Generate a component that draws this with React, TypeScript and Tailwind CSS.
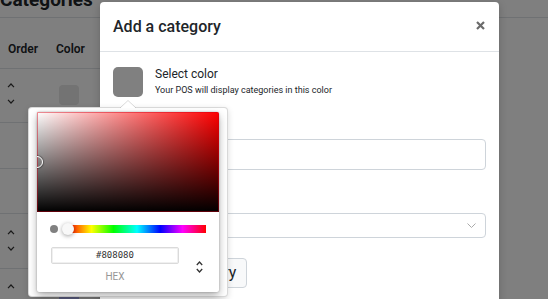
import React from "react";

function ChevronUp({ className = "" }: { className?: string }) {
  return (
    <svg width="8" height="5" viewBox="0 0 8 5" className={className}>
      <path d="M1 4.2 L4 1 L7 4.2" fill="none" stroke="currentColor" strokeWidth="1.2" />
    </svg>
  );
}

function ChevronDown({ className = "" }: { className?: string }) {
  return (
    <svg width="8" height="5" viewBox="0 0 8 5" className={className}>
      <path d="M1 0.8 L4 4 L7 0.8" fill="none" stroke="currentColor" strokeWidth="1.2" />
    </svg>
  );
}

// the page behind the modal
function CategoriesPage() {
  return (
    <div>
      <div className="h-[18px] border-b border-[#dee2e6]">
        <h1 className="relative -top-[10px] text-[19px] leading-[19px] font-bold text-[#212529]">Categories</h1>
      </div>
      <div className="w-[420px]">
        {/* table head */}
        <div className="flex items-end pb-[10px] h-[51px] border-b border-[#dee2e6] text-[12px] font-semibold text-[#212529]">
          <div className="w-[48px] pl-[8px]">Order</div>
          <div className="pl-[8px]">Color</div>
        </div>

        <div className="flex h-[54px] border-b border-[#dee2e6]">
          <div className="w-[48px] pl-[7px] pt-[14px] flex flex-col gap-[11px] text-[#333]">
            <ChevronUp />
            <ChevronDown />
          </div>
          <div className="pt-[16px] pl-[11px]">
            <div className="w-[20px] h-[20px] rounded-[4px] bg-[#e6e6e6]" />
          </div>
        </div>

        <div className="h-[46px] border-b border-[#dee2e6]" />
        <div className="h-[45px] border-b border-[#dee2e6]" />

        <div className="flex h-[55px] border-b border-[#dee2e6]">
          <div className="w-[48px] pl-[7px] pt-[16px] flex flex-col gap-[11px] text-[#333]">
            <ChevronUp />
            <ChevronDown />
          </div>
          <div className="pt-[16px] pl-[11px]">
            <div className="w-[20px] h-[20px] rounded-[4px] bg-[#f0a0a0]" />
          </div>
        </div>

        <div className="flex h-[55px]">
          <div className="w-[48px] pl-[7px] pt-[15px] flex flex-col gap-[11px] text-[#333]">
            <ChevronUp />
            <ChevronDown />
          </div>
          <div className="pt-[16px] pl-[11px]">
            <div className="w-[20px] h-[20px] rounded-[4px] bg-[#b4b8ff]" />
          </div>
        </div>
      </div>
    </div>
  );
}

function ColorPicker() {
  return (
    <div className="absolute left-[28px] top-[107px] w-[200px] h-[190px] bg-white border border-black/15 rounded-[4px] shadow-[0_2px_6px_rgba(0,0,0,0.15)] px-[8px] pt-[4px]">
      {/* arrow */}
      <svg width="16" height="8" viewBox="0 0 16 8" className="absolute left-[91px] -top-[8px]">
        <path d="M0 8 L8 0.5 L16 8 Z" fill="#fff" />
        <path d="M0 8 L8 0.5 L16 8" fill="none" stroke="rgba(0,0,0,0.15)" strokeWidth="1" />
      </svg>

      <div className="w-[182px] h-[180px] bg-white rounded-[2px] shadow-[0_0_2px_rgba(0,0,0,0.3),0_4px_8px_rgba(0,0,0,0.3)]">
        {/* saturation area */}
        <div className="relative h-[100px] bg-[#ff0000] rounded-t-[2px] overflow-hidden">
          <div className="absolute inset-0 bg-[linear-gradient(to_right,#fff,rgba(255,255,255,0))]" />
          <div className="absolute inset-0 bg-[linear-gradient(to_top,#000,rgba(0,0,0,0))]" />
          <div className="absolute inset-0 border border-[rgba(210,0,20,0.45)]" />
          <div className="absolute -left-[6px] top-[44px] w-[12px] h-[12px] rounded-full border-[1.5px] border-white shadow-[0_0_1px_1px_rgba(0,0,0,0.3)]" />
        </div>

        {/* hue row */}
        <div className="flex items-center h-[12px] mt-[11px] pl-[13px] pr-[13px]">
          <div className="w-[8px] h-[8px] rounded-full bg-[#808080]" />
          <div className="relative flex-1 ml-[10px] h-[8px] bg-[linear-gradient(to_right,#f00_0%,#ff0_17%,#0f0_33%,#0ff_50%,#00f_67%,#f0f_83%,#f00_100%)]">
            <div className="absolute -left-[6px] -top-[2px] w-[12px] h-[12px] rounded-full bg-[#f8f8f8] shadow-[0_1px_4px_rgba(0,0,0,0.37)]" />
          </div>
        </div>

        {/* hex field */}
        <div className="flex items-center mt-[12px]">
          <div className="w-[128px] ml-[14px] flex flex-col items-center">
            <div className="w-full h-[17px] border border-[#dadada] rounded-[2px] shadow-[inset_0_0_0_1px_#f0f0f0] flex items-center justify-center font-['DejaVu_Sans_Mono',monospace] text-[9px] text-[#333]">
              #808080
            </div>
            <div className="mt-[7px] text-[10px] leading-[12px] text-[#969696]">HEX</div>
          </div>
          <div className="flex-1 flex flex-col items-center gap-[2px] pt-[3px] text-[#333]">
            <svg width="7" height="5" viewBox="0 0 7 5">
              <path d="M0.8 4 L3.5 1 L6.2 4" fill="none" stroke="currentColor" strokeWidth="1.3" />
            </svg>
            <svg width="7" height="5" viewBox="0 0 7 5">
              <path d="M0.8 1 L3.5 4 L6.2 1" fill="none" stroke="currentColor" strokeWidth="1.3" />
            </svg>
          </div>
        </div>
      </div>
    </div>
  );
}

function AddCategoryModal() {
  return (
    <div className="absolute left-[100px] top-[2px] w-[399px] h-[320px] bg-white rounded-t-[4px] shadow-[0_2px_8px_rgba(0,0,0,0.2)]">
      <div className="h-[50px] flex items-center justify-between px-[13px] border-b border-[#dee2e6]">
        <h2 className="text-[16px] font-medium text-[#212529]">Add a category</h2>
        <svg width="9" height="9" viewBox="0 0 9 9" className="mr-[1px] -mt-[3px]">
          <path d="M1 1 L8 8 M8 1 L1 8" stroke="#6b6b6b" strokeWidth="2.2" />
        </svg>
      </div>

      <div className="px-[13px] pt-[15px]">
        <div className="flex">
          <div className="w-[30px] h-[30px] rounded-[5px] bg-[#808080]" />
          <div className="ml-[12px]">
            <div className="text-[12px] leading-[14px] text-[#212529]">Select color</div>
            <div className="mt-[3px] text-[9px] leading-[12px] text-[#212529]">
              Your POS will display categories in this color
            </div>
          </div>
        </div>

        <div className="mt-[20px] text-[12px] leading-[14px] text-[#212529]">Name</div>
        <div className="mt-[8px] h-[31px] border border-[#ced4da] rounded-[4px]" />

        <div className="mt-[18px] text-[12px] leading-[14px] text-[#212529]">Parent category</div>
        <div className="mt-[11px] h-[25px] border border-[#ced4da] rounded-[4px] flex items-center justify-end pr-[9px]">
          <svg width="9" height="5" viewBox="0 0 9 5">
            <path d="M0.5 0.5 L4.5 4.5 L8.5 0.5" fill="none" stroke="#aaa" strokeWidth="1" />
          </svg>
        </div>

        <div className="mt-[20px]">
          <button className="h-[30px] w-[134px] border border-[#ced4da] bg-[#f8f9fa] rounded-[4px] text-[16px] text-[#212529]">
            Create category
          </button>
        </div>
      </div>
    </div>
  );
}

export default function App() {
  return (
    <div className="relative w-[548px] h-[299px] overflow-hidden bg-white font-[Roboto,sans-serif]">
      <CategoriesPage />
      <div className="absolute inset-0 bg-black/50" />
      <AddCategoryModal />
      <ColorPicker />
    </div>
  );
}
